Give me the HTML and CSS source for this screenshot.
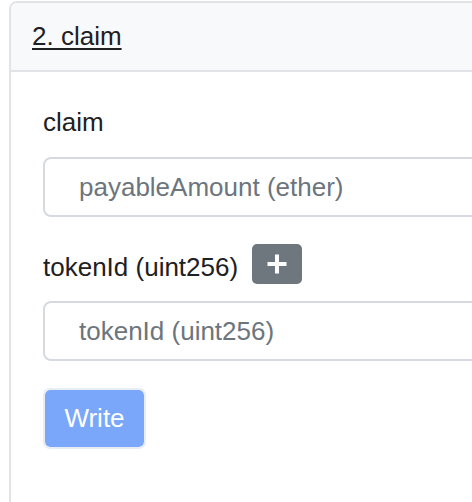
FILE: index.html
```html
<!DOCTYPE html>
<html lang="en">
<head>
<meta charset="utf-8">
<title>claim</title>
<link rel="stylesheet" href="styles.css">
</head>
<body>
<div class="card">
  <div class="card-header">
    <a class="fn-title" href="#">2. claim</a>
  </div>
  <div class="card-body">
    <div class="field">
      <label class="field-label">claim</label>
      <input class="form-input" type="text" placeholder="payableAmount (ether)">
    </div>
    <div class="field">
      <div class="label-row">
        <label class="field-label inline">tokenId (uint256)</label>
        <button class="add-btn" type="button" aria-label="add">
          <svg width="20" height="20" viewBox="0 0 20 20" aria-hidden="true">
            <path d="M8 0.5h4v7.5h7.5v4H12v7.5H8V12H0.5V8H8z" fill="#ffffff"/>
          </svg>
        </button>
      </div>
      <input class="form-input" type="text" placeholder="tokenId (uint256)">
    </div>
    <button class="write-btn" type="button" disabled>Write</button>
  </div>
</div>
</body>
</html>
```

FILE: styles.css
```css
html, body {
  margin: 0;
  padding: 0;
  background: #ffffff;
  overflow: hidden;
}

body {
  width: 472px;
  height: 502px;
  font-family: "Liberation Sans", Arial, Helvetica, sans-serif;
  font-size: 26px;
  line-height: 39px;
  color: #1e2022;
}

.card {
  margin: 1px 0 0 9px;
  width: 620px;
  min-height: 560px;
  border: 2px solid #e1e3e6;
  border-radius: 8px 0 0 0;
  background: #ffffff;
  box-sizing: border-box;
}

.card-header {
  background: #f8f9fa;
  padding: 14px 21px 14px 21px;
  border-bottom: 2px solid #e1e3e6;
  border-radius: 6px 0 0 0;
}

.fn-title {
  color: #1e2022;
  text-decoration: underline;
  text-underline-offset: 3px;
  text-decoration-thickness: 2px;
}

.card-body {
  padding: 31px 32px 0 32px;
}

.field-label {
  display: block;
  margin-bottom: 15px;
}

.field-label.inline {
  margin: 4px 14px 0 0;
}

.label-row {
  display: flex;
  align-items: flex-start;
  margin: 27px 0 14px 0;
}

.add-btn {
  width: 50px;
  height: 40px;
  border: 0;
  border-radius: 5px;
  background: #6e767e;
  padding: 0;
  display: flex;
  align-items: center;
  justify-content: center;
}

.form-input {
  display: block;
  box-sizing: border-box;
  width: 560px;
  height: 60px;
  border: 2px solid #d6dae0;
  border-radius: 8px;
  padding: 0 0 0 34px;
  font-family: "Liberation Sans", Arial, Helvetica, sans-serif;
  font-size: 26px;
  color: #1e2022;
  background: #ffffff;
  outline: none;
}

.form-input::placeholder {
  color: #6c757d;
  opacity: 1;
}

.write-btn {
  margin-top: 27px;
  width: 103px;
  height: 61px;
  box-sizing: border-box;
  border: 2px solid #e8ecf3;
  border-radius: 7px;
  background: #7aa7f9;
  background-clip: padding-box;
  color: #ffffff;
  font-family: "Liberation Sans", Arial, Helvetica, sans-serif;
  font-size: 26px;
  padding: 0;
}
```
